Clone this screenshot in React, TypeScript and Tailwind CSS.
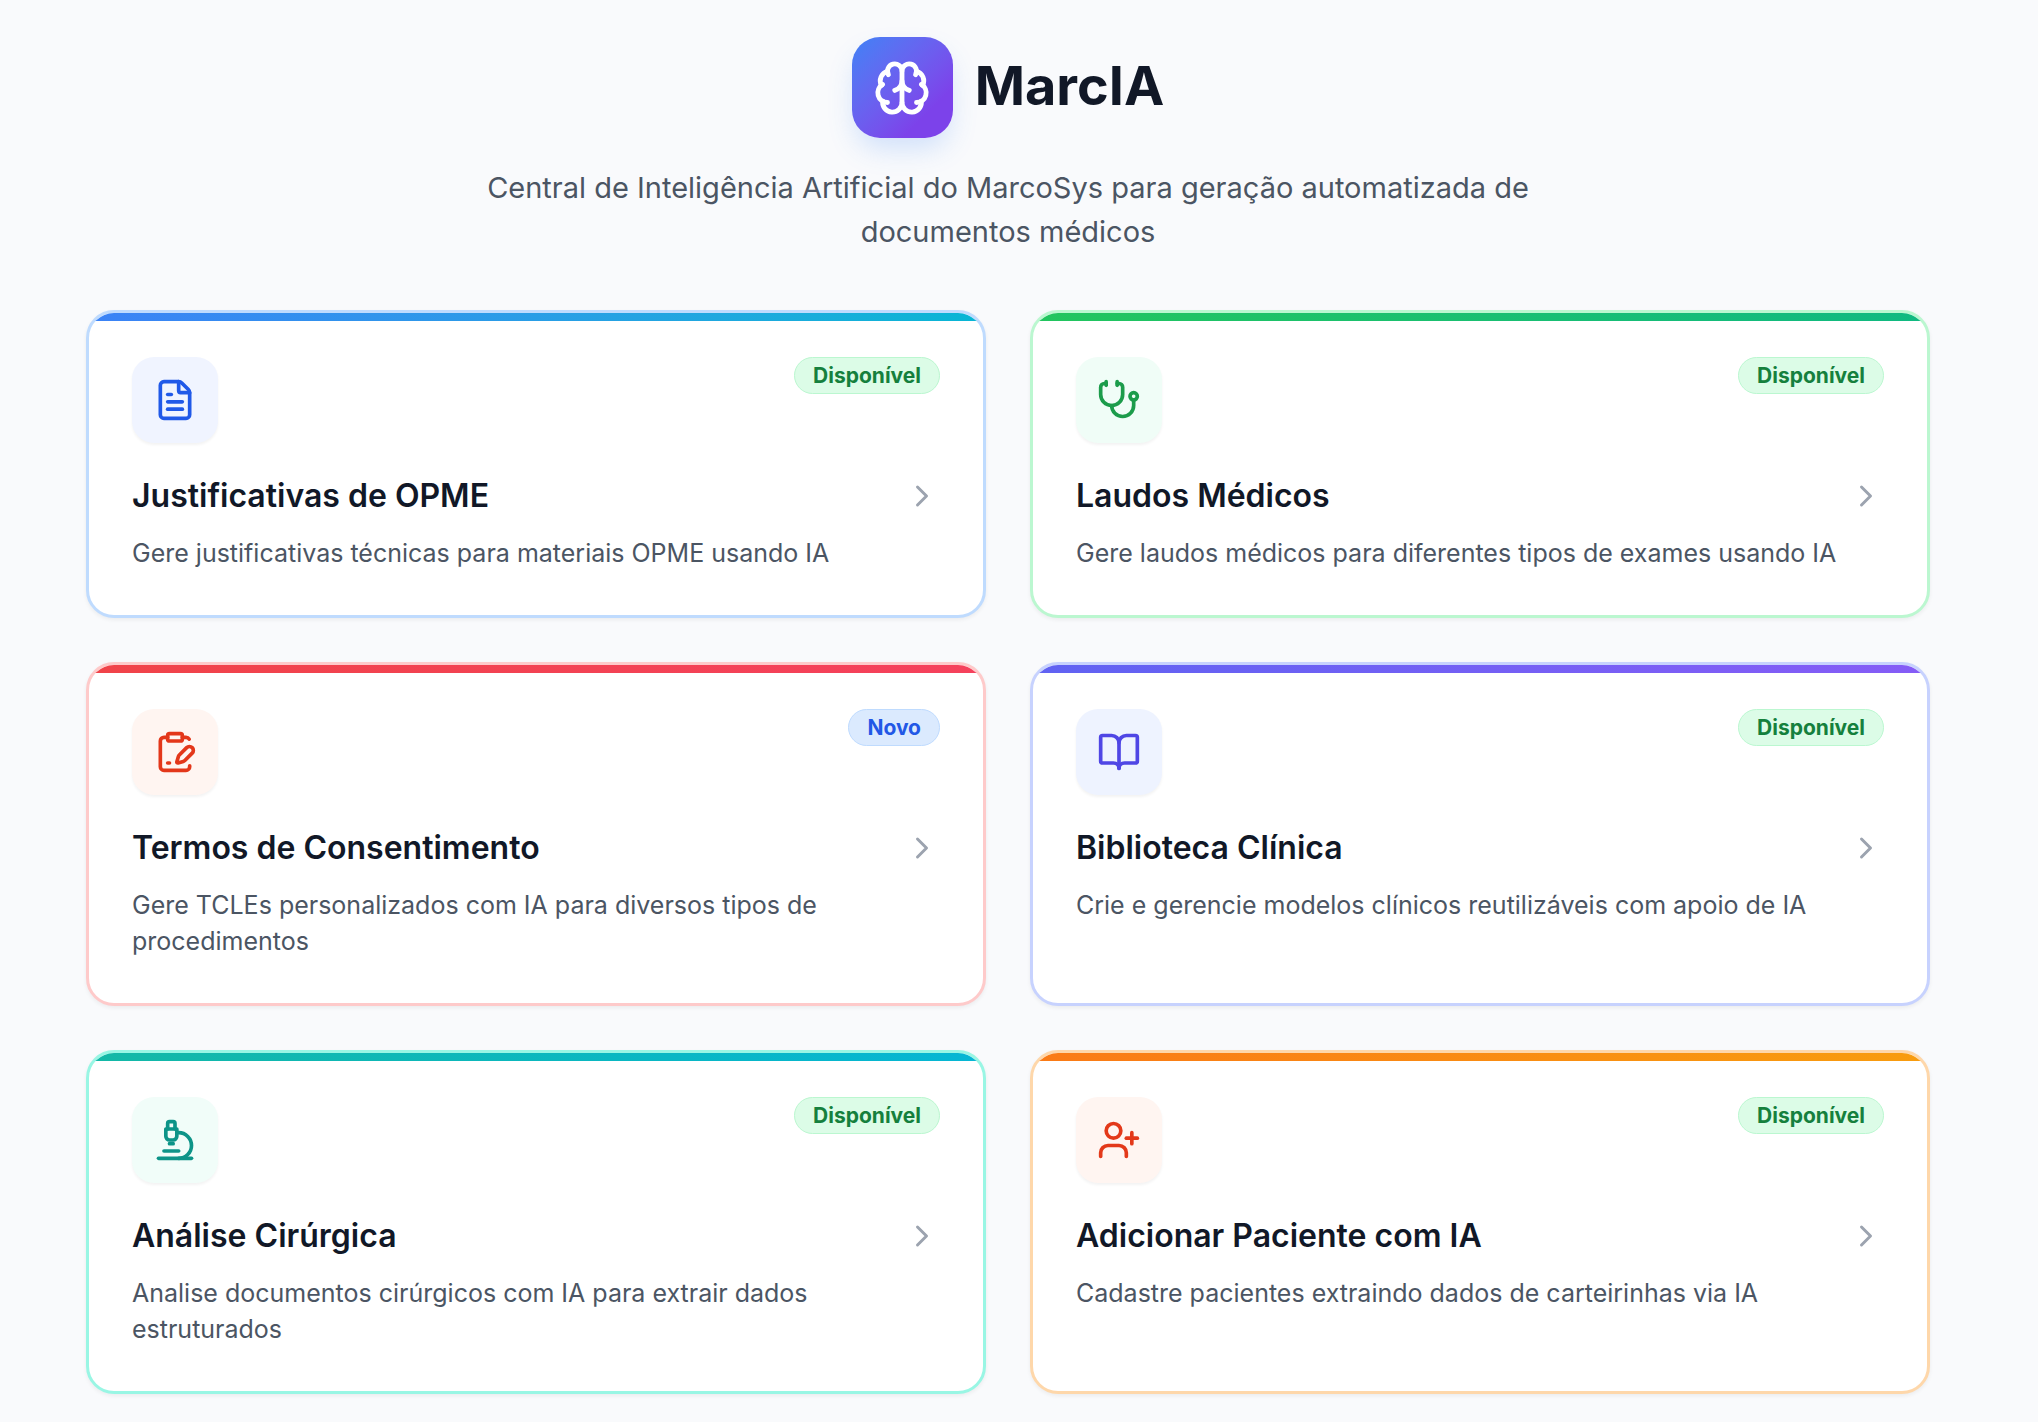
import {
  BookOpen,
  Brain,
  ChevronRight,
  ClipboardPenLine,
  FileText,
  Microscope,
  Stethoscope,
  UserPlus,
} from 'lucide-react';
import type { LucideIcon } from 'lucide-react';

type Status = 'Disponível' | 'Novo';

interface Module {
  id: string;
  title: string;
  description: string;
  status: Status;
  icon: LucideIcon;
  border: string;
  bar: string;
  iconBox: string;
}

const modules: Module[] = [
  {
    id: 'opme',
    title: 'Justificativas de OPME',
    description: 'Gere justificativas técnicas para materiais OPME usando IA',
    status: 'Disponível',
    icon: FileText,
    border: 'border-[#bfdbfe]',
    bar: 'from-[#3b82f6] to-[#06b6d4]',
    iconBox: 'bg-[#f0f4ff] text-[#2059e8]',
  },
  {
    id: 'laudos',
    title: 'Laudos Médicos',
    description: 'Gere laudos médicos para diferentes tipos de exames usando IA',
    status: 'Disponível',
    icon: Stethoscope,
    border: 'border-[#bbf7d0]',
    bar: 'from-[#22c55e] to-[#10b981]',
    iconBox: 'bg-[#f0fdf7] text-[#1c9c4b]',
  },
  {
    id: 'termos',
    title: 'Termos de Consentimento',
    description: 'Gere TCLEs personalizados com IA para diversos tipos de procedimentos',
    status: 'Novo',
    icon: ClipboardPenLine,
    border: 'border-[#fecaca]',
    bar: 'from-[#f04349] to-[#f5415c]',
    iconBox: 'bg-[#fff5f1] text-[#e3371a]',
  },
  {
    id: 'biblioteca',
    title: 'Biblioteca Clínica',
    description: 'Crie e gerencie modelos clínicos reutilizáveis com apoio de IA',
    status: 'Disponível',
    icon: BookOpen,
    border: 'border-[#c7d2fe]',
    bar: 'from-[#6062f2] to-[#855cf6]',
    iconBox: 'bg-[#eef3ff] text-[#4f46e5]',
  },
  {
    id: 'cirurgica',
    title: 'Análise Cirúrgica',
    description: 'Analise documentos cirúrgicos com IA para extrair dados estruturados',
    status: 'Disponível',
    icon: Microscope,
    border: 'border-[#99f6e4]',
    bar: 'from-[#14b8a6] to-[#06b6d4]',
    iconBox: 'bg-[#f1fdf9] text-[#0d9488]',
  },
  {
    id: 'paciente',
    title: 'Adicionar Paciente com IA',
    description: 'Cadastre pacientes extraindo dados de carteirinhas via IA',
    status: 'Disponível',
    icon: UserPlus,
    border: 'border-[#fed7aa]',
    bar: 'from-[#fa7a16] to-[#f89c0e]',
    iconBox: 'bg-[#fff5f1] text-[#e3391a]',
  },
];

const badgeStyles: Record<Status, string> = {
  'Disponível': 'bg-[#dcfce7] border-[#bbf7d0] text-[#15803d]',
  Novo: 'bg-[#dbeafe] border-[#bfdbfe] text-[#2258e6]',
};

function ModuleCard({ module }: { module: Module }) {
  const Icon = module.icon;

  return (
    <a
      href={`#${module.id}`}
      className={`flex flex-col overflow-hidden rounded-[28px] border-3 bg-white shadow-[0_2px_4px_rgba(0,0,0,0.06)] ${module.border}`}
    >
      <div className={`h-2 bg-gradient-to-r ${module.bar}`} />
      <div className="px-[43px] pt-9 pb-11">
        <div className="mb-[30px] flex items-start justify-between">
          <div
            className={`flex size-[86px] items-center justify-center rounded-[22px] shadow-[0_2px_3px_rgba(0,0,0,0.05)] ${module.iconBox}`}
          >
            <Icon size={44} />
          </div>
          <span
            className={`rounded-full border px-[18px] text-[21px] leading-[35px] font-bold ${badgeStyles[module.status]}`}
          >
            {module.status}
          </span>
        </div>
        <div className="mb-4 flex items-center justify-between">
          <h2 className="text-[32px] leading-[46px] font-semibold text-[#111827]">{module.title}</h2>
          <ChevronRight size={36} className="text-[#9ca3af]" />
        </div>
        <p className="text-[25px] leading-9 text-[#4b5563]">{module.description}</p>
      </div>
    </a>
  );
}

export default function App() {
  return (
    <main className="min-h-screen bg-[#f9fafc] pt-[37px] pr-[108px] pb-7 pl-[86px] font-['Inter',sans-serif]">
      {/* Header */}
      <header className="mb-[56px] flex flex-col items-center">
        <div className="mb-7 flex items-center gap-[22px]">
          <div className="flex size-[101px] items-center justify-center rounded-[28px] bg-gradient-to-br from-[#3b82f6] to-[#7c42ea] to-75% text-white shadow-[0_14px_28px_-4px_rgba(59,130,246,0.22)]">
            <Brain size={58} />
          </div>
          <h1 className="pb-1 text-[54px] leading-[64px] font-bold text-[#111827]">MarcIA</h1>
        </div>
        <p className="max-w-[1120px] text-center text-[29px] leading-[44px] text-[#4b5563]">
          Central de Inteligência Artificial do MarcoSys para geração automatizada de documentos médicos
        </p>
      </header>

      {/* Modules */}
      <div className="grid grid-cols-2 gap-11">
        {modules.map((module) => (
          <ModuleCard key={module.id} module={module} />
        ))}
      </div>
    </main>
  );
}
